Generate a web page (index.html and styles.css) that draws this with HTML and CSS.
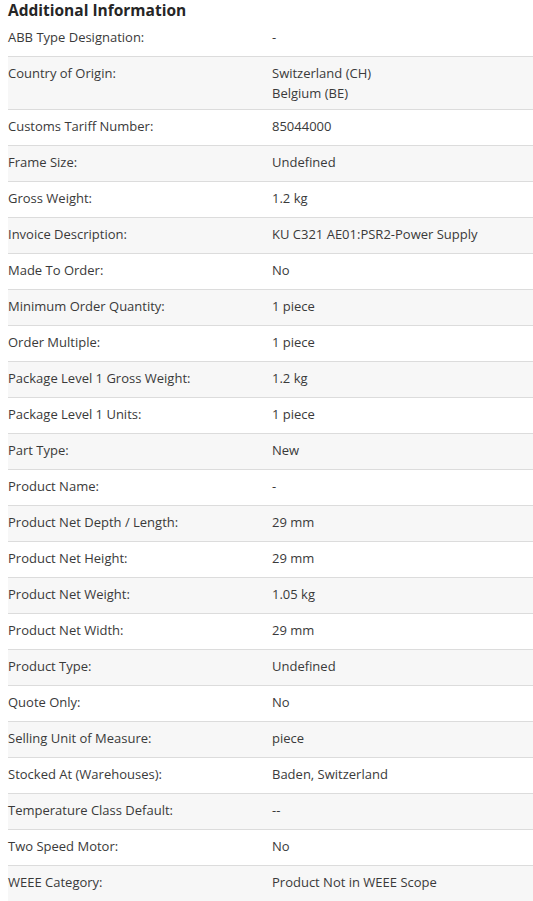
FILE: index.html
```html
<!DOCTYPE html>
<html lang="en">
<head>
<meta charset="utf-8">
<title>Additional Information</title>
<link rel="stylesheet" href="styles.css">
</head>
<body>
<section class="info">
  <h2 class="info-title">Additional Information</h2>
  <div class="info-table">
    <div class="row"><div class="label">ABB Type Designation:</div><div class="value">-</div></div>
    <div class="row"><div class="label">Country of Origin:</div><div class="value"><div>Switzerland (CH)</div><div>Belgium (BE)</div></div></div>
    <div class="row"><div class="label">Customs Tariff Number:</div><div class="value">85044000</div></div>
    <div class="row"><div class="label">Frame Size:</div><div class="value">Undefined</div></div>
    <div class="row"><div class="label">Gross Weight:</div><div class="value">1.2 kg</div></div>
    <div class="row"><div class="label">Invoice Description:</div><div class="value">KU C321 AE01:PSR2-Power Supply</div></div>
    <div class="row"><div class="label">Made To Order:</div><div class="value">No</div></div>
    <div class="row"><div class="label">Minimum Order Quantity:</div><div class="value">1 piece</div></div>
    <div class="row"><div class="label">Order Multiple:</div><div class="value">1 piece</div></div>
    <div class="row"><div class="label">Package Level 1 Gross Weight:</div><div class="value">1.2 kg</div></div>
    <div class="row"><div class="label">Package Level 1 Units:</div><div class="value">1 piece</div></div>
    <div class="row"><div class="label">Part Type:</div><div class="value">New</div></div>
    <div class="row"><div class="label">Product Name:</div><div class="value">-</div></div>
    <div class="row"><div class="label">Product Net Depth / Length:</div><div class="value">29 mm</div></div>
    <div class="row"><div class="label">Product Net Height:</div><div class="value">29 mm</div></div>
    <div class="row"><div class="label">Product Net Weight:</div><div class="value">1.05 kg</div></div>
    <div class="row"><div class="label">Product Net Width:</div><div class="value">29 mm</div></div>
    <div class="row"><div class="label">Product Type:</div><div class="value">Undefined</div></div>
    <div class="row"><div class="label">Quote Only:</div><div class="value">No</div></div>
    <div class="row"><div class="label">Selling Unit of Measure:</div><div class="value">piece</div></div>
    <div class="row"><div class="label">Stocked At (Warehouses):</div><div class="value">Baden, Switzerland</div></div>
    <div class="row"><div class="label">Temperature Class Default:</div><div class="value">--</div></div>
    <div class="row"><div class="label">Two Speed Motor:</div><div class="value">No</div></div>
    <div class="row"><div class="label">WEEE Category:</div><div class="value">Product Not in WEEE Scope</div></div>
  </div>
</section>
</body>
</html>
```

FILE: styles.css
```css
html, body {
  margin: 0;
  padding: 0;
  background: #ffffff;
}

body {
  font-family: "Open Sans", "Noto Sans", "Liberation Sans", sans-serif;
  color: #3a3a3a;
  font-size: 13px;
  line-height: 20px;
}

.info {
  padding-left: 8px;
}

.info-title {
  margin: 0;
  font-size: 15.5px;
  line-height: 21px;
  font-weight: 700;
  color: #262626;
}

.info-table {
  display: flex;
  flex-direction: column;
}

.row {
  display: grid;
  grid-template-columns: 264px 1fr;
  min-height: 36px;
  box-sizing: border-box;
  padding: 6px 0;
  border-bottom: 1px solid #dcdcdc;
}

.row:nth-child(even) {
  background: #f7f7f7;
}

.row:last-child {
  border-bottom: none;
}
```
